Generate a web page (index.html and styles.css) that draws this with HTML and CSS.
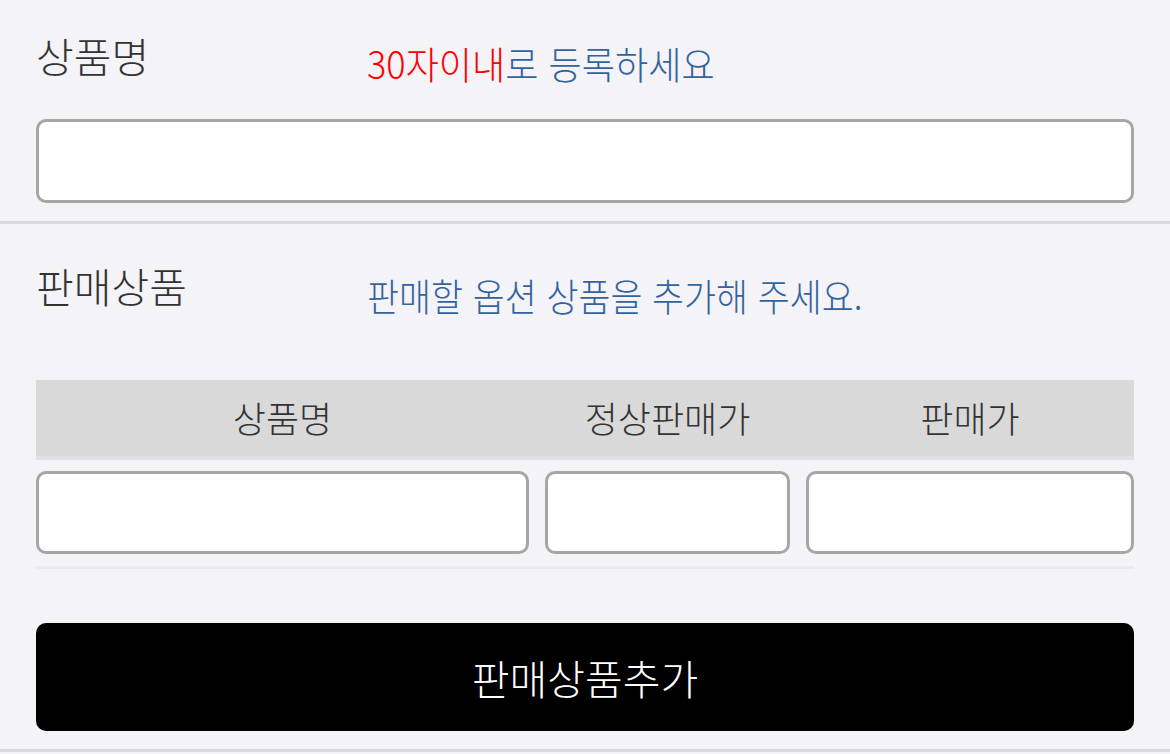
FILE: index.html
```html
<!DOCTYPE html>
<html lang="ko">
<head>
    <meta charset="UTF-8">
    <meta name="viewport" content="width=device-width, initial-scale=1.0">
    <title>판매상품 등록</title>
    <link rel="stylesheet" href="styles.css">
</head>
<body>
    <div class="section name-section">
        <div class="field-head">
            <label class="field-label" for="goodsName">상품명</label>
            <span class="hint"><span class="hint-text"><em class="warn">30자이내</em>로 등록하세요</span></span>
        </div>
        <input type="text" id="goodsName" class="text-box" maxlength="30">
    </div>

    <div class="section option-section">
        <div class="field-head">
            <span class="field-label">판매상품</span>
            <span class="hint hint-low"><span class="hint-text">판매할 옵션 상품을 추가해 주세요.</span></span>
        </div>

        <div class="option-grid option-head">
            <div>상품명</div>
            <div>정상판매가</div>
            <div>판매가</div>
        </div>
        <div class="option-grid option-row">
            <input type="text" class="text-box" id="optName">
            <input type="number" class="text-box" id="optPrice">
            <input type="number" class="text-box" id="optSale">
        </div>
        <div class="row-line"></div>

        <button class="add-btn" id="addOption">판매상품추가</button>
    </div>

    <script>
        let addBtn = document.getElementById('addOption');
        addBtn.addEventListener('click', () => {
            let name = document.getElementById('optName').value;
            if (name == '') {
                return;
            }
        });
    </script>
</body>
</html>
```

FILE: styles.css
```css
* {
    box-sizing: border-box;
    margin: 0;
    padding: 0;
}
body {
    font-family: "Noto Sans CJK KR", "Noto Sans", sans-serif;
    background-color: #f4f3f8;
    color: #333333;
}
.section {
    padding: 0 36px;
    border-bottom: 3px solid #d9d8dc;
}
.name-section {
    padding-top: 31px;
    padding-bottom: 18px;
}
.option-section {
    padding-top: 37px;
    padding-bottom: 18px;
}
.field-head {
    display: grid;
    grid-template-columns: 331px 1fr;
    align-items: start;
    height: 88px;
}
.option-section .field-head {
    height: 119px;
}
.field-label {
    font-size: 41px;
    line-height: 48px;
    font-weight: 300;
    color: #333333;
}
.hint {
    font-size: 38px;
    line-height: 48px;
    font-weight: 300;
    color: #33639f;
    white-space: nowrap;
    padding-top: 8px;
}
.hint-low {
    padding-top: 10px;
}
.hint-text {
    display: inline-block;
    transform: scaleX(0.95);
    transform-origin: left center;
}
.hint-low .hint-text {
    transform: scaleX(0.915);
}
.warn {
    font-style: normal;
    color: #ff0000;
}
.text-box {
    display: block;
    width: 100%;
    height: 84px;
    border: 3px solid #a6a6a6;
    border-radius: 10px;
    background-color: white;
    font-size: 30px;
    padding: 0 14px;
    font-family: inherit;
    outline: none;
}
input[type=number]::-webkit-inner-spin-button,
input[type=number]::-webkit-outer-spin-button {
    -webkit-appearance: none;
    appearance: none;
    margin: 0;
}
.option-grid {
    display: grid;
    grid-template-columns: 493px 245px 1fr;
    column-gap: 16px;
}
.option-head {
    background-color: #d9d9d9;
    border-bottom: 4px solid #e1e0e4;
    height: 80px;
    align-items: center;
    text-align: center;
    font-size: 36px;
    line-height: 44px;
    font-weight: 300;
    color: #333333;
    padding-bottom: 2px;
}
.option-row {
    margin-top: 11px;
}
.option-row .text-box {
    height: 83px;
}
.row-line {
    height: 3px;
    background-color: #ebeaee;
    margin-top: 12px;
}
.add-btn {
    display: block;
    width: 100%;
    height: 108px;
    margin-top: 54px;
    border: none;
    border-radius: 10px;
    background-color: #000000;
    color: white;
    font-family: inherit;
    font-size: 41px;
    font-weight: 300;
    cursor: pointer;
}
```
